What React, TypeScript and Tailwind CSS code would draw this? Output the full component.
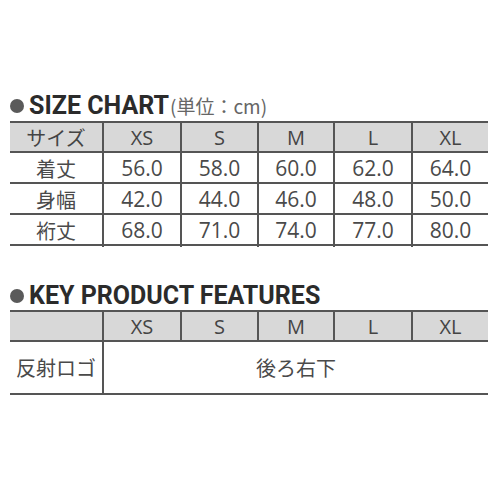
import React from 'react';

const sizes = ['XS', 'S', 'M', 'L', 'XL'];

const chartRows = [
  { label: '着丈', values: ['56.0', '58.0', '60.0', '62.0', '64.0'] },
  { label: '身幅', values: ['42.0', '44.0', '46.0', '48.0', '50.0'] },
  { label: '裄丈', values: ['68.0', '71.0', '74.0', '77.0', '80.0'] },
];

const cols = 'grid grid-cols-[92px_78px_77px_76px_78px_77px]';
const cell = 'flex items-center justify-center border-l-2 border-[#555]';
const jp = { fontFamily: '"Noto Sans CJK JP", "Noto Sans", sans-serif' };
const latin = { fontFamily: '"Open Sans", "Noto Sans CJK JP", sans-serif' };

const Title = ({ text, note }: { text: string; note?: string }) => (
  <div className="flex items-center h-[28px] pt-[3px]">
    <span className="w-[14px] h-[14px] rounded-full bg-[#5a5a5a] mr-[5px]" />
    <div className="flex items-baseline">
      <span className="text-[25px] font-bold text-[#2b2b2b] leading-none" style={{ fontFamily: 'Roboto, "Liberation Sans", sans-serif' }}>
        {text}
      </span>
      {note && (
        <span className="text-[19px] text-[#666] ml-[1px] leading-none" style={jp}>
          {note}
        </span>
      )}
    </div>
  </div>
);

const HeaderRow = ({ first }: { first?: string }) => (
  <div className={`${cols} h-[32px] bg-[#d8d8d8] border-t-2 border-b-2 border-[#555] text-[20px] text-[#444]`}>
    <div className="flex items-center justify-center" style={jp}>{first}</div>
    {sizes.map((s) => (
      <div key={s} className={cell} style={latin}>{s}</div>
    ))}
  </div>
);

export default function App() {
  return (
    <div className="w-[500px] h-[500px] bg-white pt-[90px] pl-[10px]">
      <div className="w-[478px]">
        <Title text="SIZE CHART" note="(単位：cm)" />
        <div className="mt-[3px]">
          <HeaderRow first="サイズ" />
          {chartRows.map((r) => (
            <div key={r.label} className={`${cols} h-[31px] border-b-2 border-[#555] text-[#4a4a4a]`}>
              <div className="flex items-center justify-center text-[20px]" style={jp}>{r.label}</div>
              {r.values.map((v, i) => (
                <div key={i} className={`${cell} text-[21px]`} style={latin}>{v}</div>
              ))}
            </div>
          ))}
        </div>

        <div className="mt-[34px]">
          <Title text="KEY PRODUCT FEATURES" />
        </div>
        <div className="mt-[2px]">
          <HeaderRow />
          <div className="grid grid-cols-[92px_386px] h-[53px] border-b-2 border-[#555] text-[20px] text-[#4a4a4a]" style={jp}>
            <div className="flex items-center justify-center">反射ロゴ</div>
            <div className={cell}>後ろ右下</div>
          </div>
        </div>
      </div>
    </div>
  );
}
